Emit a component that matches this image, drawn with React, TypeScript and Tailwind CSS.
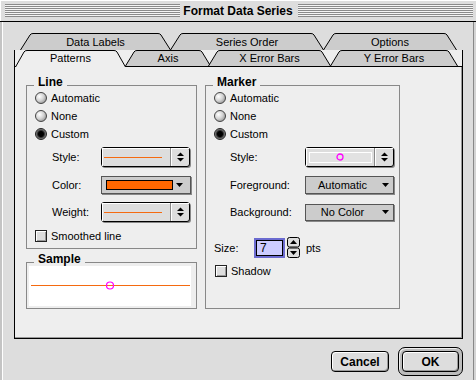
import React from "react";

function Tab({
  label,
  w,
  widthClass,
  h,
  slant,
  selected,
  className = "",
}: {
  label: string;
  w: number;
  widthClass: string;
  h: number;
  slant: number;
  selected?: boolean;
  className?: string;
}) {
  const H = selected ? h + 1 : h;
  const s = slant;
  const d = `M0.5,${H} L${s},2 Q${s + 0.8},0.5 ${s + 3},0.5 L${w - s - 3},0.5 Q${w - s - 0.8},0.5 ${w - s},2 L${w - 0.5},${H}`;
  return (
    <div
      className={`relative flex items-center justify-center ${widthClass} ${selected ? "z-10" : ""} ${className}`}
    >
      <svg className="absolute left-0 top-0 overflow-visible" width={w} height={H}>
        <path d={d + " Z"} fill={selected ? "#eeeeee" : "#cccccc"} />
        <path d={d} fill="none" stroke="#000" />
      </svg>
      <span className="relative leading-[14px]">{label}</span>
    </div>
  );
}

function Radio({ checked }: { checked?: boolean }) {
  return checked ? (
    <span className="w-[12px] h-[12px] shrink-0 rounded-full border border-[#222] bg-[radial-gradient(circle,#000_0px,#000_2.5px,#333_3.5px,#8a8a8a_5px)]" />
  ) : (
    <span className="w-[12px] h-[12px] shrink-0 rounded-full border border-[#444] bg-[radial-gradient(circle_at_35%_35%,#ffffff,#d4d4d4_45%,#7a7a7a)]" />
  );
}

function Check() {
  return (
    <span className="w-[12px] h-[12px] shrink-0 border border-[#222] bg-[#dddddd] shadow-[inset_1px_1px_0_#fff,inset_-1px_-1px_0_#999]" />
  );
}

function Arrows() {
  return (
    <svg width="7" height="10" viewBox="0 0 7 10">
      <polygon points="0,4 3.5,0.5 7,4" fill="#000" />
      <polygon points="0,6 7,6 3.5,9.5" fill="#000" />
    </svg>
  );
}

function DownTri() {
  return (
    <svg width="7" height="4" viewBox="0 0 7 4">
      <polygon points="0,0 7,0 3.5,4" fill="#000" />
    </svg>
  );
}

function OrangeLine() {
  return (
    <svg className="-ml-[6px]" width="58" height="3" shapeRendering="crispEdges">
      <rect x="0" y="1" width="58" height="1" fill="#f56a10" />
    </svg>
  );
}

function StepPopup({ children }: { children: React.ReactNode }) {
  return (
    <div className="h-[20px] w-[89px] flex rounded-[3px] border border-black bg-[#dddddd] shadow-[1px_1px_0_#888]">
      <div className="flex-1 flex items-center justify-center shadow-[inset_1px_1px_0_#fff]">
        {children}
      </div>
      <div className="w-[19px] border-l border-[#888] flex items-center justify-center shadow-[inset_1px_1px_0_#fff]">
        <Arrows />
      </div>
    </div>
  );
}

function Row({ label, labelW, children, h }: { label: string; labelW: string; children: React.ReactNode; h: string }) {
  return (
    <div className={`flex items-center ${h}`}>
      <span className={`${labelW} leading-[14px]`}>{label}</span>
      {children}
    </div>
  );
}

function Group({ title, className, children }: { title: string; className: string; children?: React.ReactNode }) {
  return (
    <div className={`relative border border-[#888] ${className}`}>
      <span className="absolute left-[7px] -top-[11px] bg-[#eeeeee] px-[4px] text-[12px] font-bold leading-[14px]">
        {title}
      </span>
      {children}
    </div>
  );
}

const stripes =
  "flex-1 h-[13px] bg-[repeating-linear-gradient(to_bottom,#8a8a8a_0px,#8a8a8a_1px,#f4f4f4_1px,#f4f4f4_2px)]";

export default function App() {
  return (
    <div className="w-[476px] h-[380px] bg-[#dddddd] flex flex-col overflow-hidden text-[11px] text-black font-['Liberation_Sans',Arial,sans-serif]">
      <div className="h-[22px] shrink-0 border-b border-black flex items-center pl-[5px] pr-[3px] shadow-[inset_1px_1px_0_#fff]">
        <div className={stripes} />
        <span className="pl-[3px] pr-[5px] text-[12px] font-bold leading-[14px]">Format Data Series</span>
        <div className={stripes} />
      </div>

      <div className="flex-1 flex flex-col border-l-2 border-l-[#c4c4c4] border-r-2 border-r-[#d4d4d4] shadow-[inset_1px_0_0_#fff,inset_-1px_0_0_#888]">
        {/* back tab row */}
        <div className="flex h-[17px] mt-[11px] ml-[18px]">
          <Tab label="Data Labels" w={151} widthClass="w-[151px] h-[17px]" h={17} slant={10} />
          <Tab label="Series Order" w={154} widthClass="w-[154px] h-[17px]" h={17} slant={10} className="-ml-px" />
          <Tab label="Options" w={134} widthClass="w-[134px] h-[17px]" h={17} slant={10} className="-ml-px" />
        </div>

        {/* front tab row */}
        <div className="relative z-10 flex h-[16px] ml-[12px] w-[449px] bg-[#eeeeee] border-x border-black">
          <Tab label="Patterns" w={111} widthClass="w-[111px] h-[16px]" h={16} slant={9} selected />
          <Tab label="Axis" w={86} widthClass="w-[86px] h-[16px]" h={16} slant={9} className="-ml-px" />
          <Tab label="X Error Bars" w={123} widthClass="w-[123px] h-[16px]" h={16} slant={9} className="-ml-[3px]" />
          <Tab label="Y Error Bars" w={128} widthClass="w-[128px] h-[16px]" h={16} slant={9} className="-ml-px" />
        </div>

        {/* panel */}
        <div className="ml-[12px] w-[449px] h-[273px] border border-black bg-[#eeeeee] shadow-[inset_-1px_-1px_0_#999] flex gap-[8px] pt-[18px] pl-[11px]">
          <div className="flex flex-col w-[171px] gap-[13px]">
            <Group title="Line" className="h-[164px] pt-[3px]">
              <div className="flex items-center gap-[4px] h-[18px] pl-[8px]"><Radio /><span className="leading-[14px]">Automatic</span></div>
              <div className="flex items-center gap-[4px] h-[18px] pl-[8px]"><Radio /><span className="leading-[14px]">None</span></div>
              <div className="flex items-center gap-[4px] h-[18px] pl-[8px]"><Radio checked /><span className="leading-[14px]">Custom</span></div>
              <div className="pl-[25px]">
                <Row label="Style:" labelW="w-[49px]" h="h-[28px]">
                  <StepPopup>
                    <OrangeLine />
                  </StepPopup>
                </Row>
                <Row label="Color:" labelW="w-[49px]" h="h-[27px]">
                  <div className="h-[18px] w-[90px] flex items-center border border-[#555] bg-[#cccccc] shadow-[1px_1px_0_#888] pl-[4px] pr-[4px]">
                    <span className="w-[67px] h-[10px] border border-black bg-[#ff6600]" />
                    <span className="flex-1 flex justify-center"><DownTri /></span>
                  </div>
                </Row>
                <Row label="Weight:" labelW="w-[49px]" h="h-[28px]">
                  <StepPopup>
                    <OrangeLine />
                  </StepPopup>
                </Row>
              </div>
              <div className="flex items-center gap-[4px] h-[20px] pl-[8px]"><Check /><span className="leading-[14px]">Smoothed line</span></div>
            </Group>

            <Group title="Sample" className="h-[47px] pt-[3px] pl-[2px]">
              <div className="w-[162px] h-[40px] bg-white">
                <svg width="162" height="40">
                  <rect x="2" y="19" width="159" height="1" fill="#f56a10" shapeRendering="crispEdges" />
                  <circle cx="81" cy="19.5" r="3.5" fill="none" stroke="#ff00ff" strokeWidth="1.2" />
                </svg>
              </div>
            </Group>
          </div>

          <Group title="Marker" className="w-[195px] h-[224px] pt-[3px]">
            <div className="flex items-center gap-[4px] h-[18px] pl-[8px]"><Radio /><span className="leading-[14px]">Automatic</span></div>
            <div className="flex items-center gap-[4px] h-[18px] pl-[8px]"><Radio /><span className="leading-[14px]">None</span></div>
            <div className="flex items-center gap-[4px] h-[18px] pl-[8px]"><Radio checked /><span className="leading-[14px]">Custom</span></div>
            <div className="pl-[24px]">
              <Row label="Style:" labelW="w-[75px]" h="h-[28px]">
                <StepPopup>
                  <div className="w-[63px] h-[11px] border border-white bg-[#e2e2e2] flex items-center justify-center">
                    <svg width="8" height="8">
                      <circle cx="4" cy="4" r="3" fill="none" stroke="#ff00ff" strokeWidth="1.3" />
                    </svg>
                  </div>
                </StepPopup>
              </Row>
              <Row label="Foreground:" labelW="w-[75px]" h="h-[27px]">
                <div className="h-[18px] w-[89px] flex items-center border border-[#555] bg-[#cccccc] shadow-[1px_1px_0_#888]">
                  <span className="flex-1 text-center leading-[14px] pl-[2px]">Automatic</span>
                  <span className="w-[16px] flex justify-center"><DownTri /></span>
                </div>
              </Row>
              <Row label="Background:" labelW="w-[75px]" h="h-[28px]">
                <div className="h-[17px] w-[89px] flex items-center border border-[#555] bg-[#cccccc] shadow-[1px_1px_0_#888]">
                  <span className="flex-1 text-center leading-[14px] pl-[2px]">No Color</span>
                  <span className="w-[16px] flex justify-center"><DownTri /></span>
                </div>
              </Row>
            </div>
            <div className="flex items-center h-[21px] mt-[11px] pl-[8px]">
              <span className="w-[40px] leading-[14px]">Size:</span>
              <div className="w-[31px] h-[20px] border-2 border-[#6b6bd0] flex">
                <div className="flex-1 border border-black bg-[#ccccff] pl-[3px] leading-[15px] text-[12px]">7</div>
              </div>
              <svg className="ml-[2px]" width="13" height="21" viewBox="0 0 13 21">
                <rect x="0.5" y="0.5" width="12" height="9.5" rx="2" fill="#dddddd" stroke="#000" />
                <rect x="0.5" y="11" width="12" height="9.5" rx="2" fill="#dddddd" stroke="#000" />
                <polygon points="3,7 6.5,3 10,7" fill="#000" />
                <polygon points="3,14 10,14 6.5,18" fill="#000" />
              </svg>
              <span className="ml-[6px] leading-[14px]">pts</span>
            </div>
            <div className="flex items-center gap-[4px] h-[14px] mt-[6px] pl-[9px]"><Check /><span className="leading-[14px]">Shadow</span></div>
          </Group>
        </div>

        {/* buttons */}
        <div className="flex justify-end items-center gap-[9px] h-[29px] mt-[8px] pr-[11px]">
          <button className="w-[58px] h-[21px] rounded-[4px] border border-black bg-[#dddddd] shadow-[inset_1px_1px_0_#fff,inset_-1px_-1px_0_#999] text-[12px] font-bold leading-[14px]">
            Cancel
          </button>
          <div className="w-[65px] h-[29px] rounded-[7px] border border-black bg-[#bdbdbd] p-[3px] flex shadow-[inset_1px_1px_0_#eee]">
            <button className="flex-1 rounded-[4px] border border-black bg-[#dddddd] shadow-[inset_1px_1px_0_#fff,inset_-1px_-1px_0_#999] text-[12px] font-bold leading-[14px]">
              OK
            </button>
          </div>
        </div>
      </div>
    </div>
  );
}
